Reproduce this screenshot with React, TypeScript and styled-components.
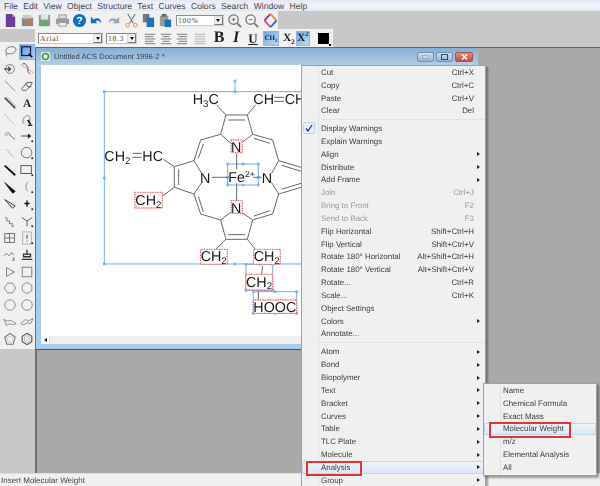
import React from "react";
import styled, { createGlobalStyle } from "styled-components";

const Global = createGlobalStyle`
  html, body { margin: 0; padding: 0; background: #c8c8c8; }
  * { box-sizing: border-box; }
`;

const UI = `"Liberation Sans", Arial, sans-serif`;

const Shell = styled.div`
  position: relative;
  width: 600px;
  height: 486px;
  overflow: hidden;
  display: flex;
  flex-direction: column;
  font-family: ${UI};
  font-size: 8px;
  color: #3a3a3a;
  filter: blur(0.3px);
  text-rendering: geometricPrecision;
`;

const MenuBar = styled.div`
  height: 11px;
  flex: none;
  display: flex;
  align-items: center;
  gap: 5.3px;
  padding-left: 4px;
  background: linear-gradient(#e4e8f4, #f3f4fa 55%, #e2e5f2);
  font-size: 8.6px;
  color: #444;
`;

const TopBar = styled.div`
  height: 18px;
  flex: none;
  display: flex;
  background: #c8c8c8;
`;

const TopTools = styled.div`
  width: 278px;
  display: flex;
  align-items: center;
  padding-left: 1.5px;
  background: #f0f0f0;
`;

const IconSlot = styled.div<{ $w?: number; $ml?: number; $on?: boolean }>`
  width: ${(p) => p.$w ?? 17.3}px;
  margin-left: ${(p) => p.$ml ?? 0}px;
  height: 15px;
  flex: none;
  display: flex;
  align-items: center;
  justify-content: center;
  background: ${(p) => (p.$on ? "linear-gradient(135deg,#6f9fe0,#bfe0fa)" : "transparent")};
  outline: ${(p) => (p.$on ? "1px solid #8fb6ea" : "none")};
  outline-offset: -1px;
`;

const Combo = styled.div<{ $w: number; $ml?: number }>`
  width: ${(p) => p.$w}px;
  margin-left: ${(p) => p.$ml ?? 0}px;
  height: 11px;
  flex: none;
  display: flex;
  align-items: center;
  justify-content: space-between;
  background: #fff;
  border: 1px solid #8a8a8a;
  border-right-color: #ccc;
  border-bottom-color: #ccc;
  padding-left: 1px;
  font-family: "Liberation Serif", serif;
  font-size: 7.6px;
  letter-spacing: 0.7px;
  color: #444;
`;

const ComboDrop = styled.span`
  width: 9px;
  height: 9px;
  flex: none;
  display: flex;
  align-items: center;
  justify-content: center;
  background: #eee;
  border: 1px solid #777;
  border-top-color: #ddd;
  border-left-color: #ddd;
  &::after {
    content: "";
    border-left: 2.5px solid transparent;
    border-right: 2.5px solid transparent;
    border-top: 3px solid #111;
  }
`;

const Body = styled.div`
  flex: 1;
  min-height: 0;
  display: grid;
  grid-template-columns: 35px 1fr;
`;

const LeftColumn = styled.div`
  display: flex;
  flex-direction: column;
  background: #c8c8c8;
`;

const LeftSpacer = styled.div`
  height: 13px;
  flex: none;
`;

const Toolbox = styled.div`
  height: 307px;
  flex: none;
  display: grid;
  grid-template-columns: 17px 17px;
  grid-auto-rows: 16.9px;
  padding: 1.5px 0 0 1.5px;
  background: #f0f0f0;
`;

const ToolCell = styled.div<{ $on?: boolean }>`
  display: flex;
  align-items: center;
  justify-content: center;
  background: ${(p) => (p.$on ? "linear-gradient(135deg,#5f93d8,#b6daf6)" : "transparent")};
  outline: ${(p) => (p.$on ? "1px solid #8db4e6" : "none")};
  outline-offset: -1px;
`;

const RightColumn = styled.div`
  display: flex;
  flex-direction: column;
  min-width: 0;
`;

const FormatBar = styled.div`
  height: 18px;
  flex: none;
  display: flex;
  background: #c8c8c8;
`;

const FormatTools = styled.div`
  width: 298px;
  display: flex;
  align-items: center;
  padding-left: 3px;
  background: #f2f2f2;
`;

const BoldGlyph = styled.span<{ $italic?: boolean; $under?: boolean }>`
  font-family: "Liberation Serif", serif;
  font-weight: 700;
  font-size: ${(p) => (p.$under ? 13 : 16)}px;
  line-height: 1;
  color: #222;
  font-style: ${(p) => (p.$italic ? "italic" : "normal")};
  text-decoration: ${(p) => (p.$under ? "underline" : "none")};
`;

const ScriptGlyph = styled.span`
  font-family: "Liberation Serif", serif;
  font-weight: 700;
  font-size: 11px;
  line-height: 1;
  color: #222;
  white-space: nowrap;
  sub, sup { font-size: 7px; line-height: 0; }
`;

const ChemGlyph = styled.span`
  font-family: "Liberation Serif", serif;
  font-weight: 700;
  font-size: 7px;
  color: #123;
  sub { font-size: 5px; line-height: 0; }
`;

const Swatch = styled.span`
  position: relative;
  width: 11px;
  height: 11px;
  background: #000;
  &::after {
    content: "";
    position: absolute;
    right: -2px;
    bottom: -2px;
    width: 2px;
    height: 2px;
    background: #000;
  }
`;

const Mdi = styled.div`
  position: relative;
  flex: 1;
  background: #a9a9a9;
  border-left: 2px solid #6f6f6f;
  border-top: 1px solid #666;
`;

const DocWindow = styled.div`
  position: absolute;
  left: -1px;
  top: 0;
  width: 442px;
  height: 302px;
  display: flex;
  flex-direction: column;
  padding: 0 5px 5px;
  background: linear-gradient(#88aed2 0, #b3cde6 17px, #a7cdee 18px);
  border-bottom: 1px solid #1f6770;
  border-top-right-radius: 3px;
`;

const TitleBar = styled.div`
  height: 17px;
  flex: none;
  display: flex;
  align-items: center;
  font-size: 7.6px;
  color: #38424e;
`;

const TitleText = styled.span`
  margin-left: 4px;
  flex: 1;
  white-space: nowrap;
`;

const CaptionButton = styled.span<{ $close?: boolean; $w: number }>`
  width: ${(p) => p.$w}px;
  height: 10px;
  margin-left: 2px;
  display: flex;
  align-items: center;
  justify-content: center;
  border: 1px solid ${(p) => (p.$close ? "#a8554c" : "#6f93b6")};
  border-radius: 2px;
  background: ${(p) =>
    p.$close ? "linear-gradient(#e48d7e,#c8483a)" : "linear-gradient(#cfe0ef,#93b4d3)"};
`;

const Client = styled.div`
  flex: 1;
  min-height: 0;
  background: #fff;
`;

const Sheet = styled.svg`
  display: block;
  width: 100%;
  height: 100%;
`;

const HScroll = styled.div`
  height: 8px;
  flex: none;
  display: flex;
  background: #efefef;
`;

const ScrollArrow = styled.span`
  width: 9px;
  display: flex;
  align-items: center;
  justify-content: center;
  background: #fff;
  border-right: 1px solid #d8d8d8;
  &::after {
    content: "";
    border-top: 2.5px solid transparent;
    border-bottom: 2.5px solid transparent;
    border-right: 3px solid #111;
  }
`;

const StatusBar = styled.div`
  height: 13px;
  flex: none;
  display: flex;
  align-items: center;
  padding: 1px 0 0 1px;
  background: #f0f0f0;
  border-top: 1px solid #ddd;
  font-size: 8px;
  color: #444;
`;

const Popup = styled.div<{ $left: number; $top: number; $width: number; $height: number; $gutter: number }>`
  position: absolute;
  left: ${(p) => p.$left}px;
  top: ${(p) => p.$top}px;
  width: ${(p) => p.$width}px;
  height: ${(p) => p.$height}px;
  border: 1px solid #a0a0a0;
  box-shadow: 2px 2px 2px rgba(0, 0, 0, 0.35);
  background:
    linear-gradient(#e2e3e3, #e2e3e3) ${(p) => p.$gutter}px 0 / 1px 100% no-repeat,
    #f0f0f0;
  font-size: 7.9px;
  color: #3c3c3c;
`;

const Row = styled.div<{ $hot?: boolean; $off?: boolean; $gutter: number }>`
  position: relative;
  height: 12.85px;
  display: flex;
  align-items: center;
  padding-left: ${(p) => p.$gutter + 3}px;
  white-space: nowrap;
  color: ${(p) => (p.$off ? "#9a9a9a" : "inherit")};
  border-radius: 2px;
  background: ${(p) => (p.$hot ? "linear-gradient(#f1f5fc,#d9e5f6)" : "transparent")};
  box-shadow: ${(p) => (p.$hot ? "inset 0 0 0 1px #c3d6f0" : "none")};
`;

const RowLabel = styled.span`
  flex: 1;
`;

const RowKeys = styled.span`
  margin-right: 11px;
`;

const SubArrow = styled.span`
  width: 0;
  height: 0;
  margin-right: 5px;
  border-top: 2.5px solid transparent;
  border-bottom: 2.5px solid transparent;
  border-left: 3px solid #222;
`;

const CheckBox = styled.span`
  position: absolute;
  left: 1px;
  top: 0;
  width: 12px;
  height: 12px;
  display: flex;
  align-items: center;
  justify-content: center;
  background: #e6f0fb;
  border: 1px solid #b8d2f0;
  border-radius: 2px;
`;

const Divider = styled.div<{ $h: number; $gutter: number }>`
  height: ${(p) => p.$h}px;
  display: flex;
  align-items: center;
  padding-left: ${(p) => p.$gutter + 1}px;
  &::after {
    content: "";
    flex: 1;
    height: 1px;
    background: #e2e3e3;
  }
`;

const RedBox = styled.span<{ $left: number; $top: number; $w: number; $h: number }>`
  position: absolute;
  left: ${(p) => p.$left}px;
  top: ${(p) => p.$top}px;
  width: ${(p) => p.$w}px;
  height: ${(p) => p.$h}px;
  border: 2px solid #e8322e;
`;

const Ico = styled.svg.attrs({ viewBox: "0 0 16 16" })<{ $s?: number }>`
  width: ${(p) => p.$s ?? 15}px;
  height: ${(p) => p.$s ?? 15}px;
  display: block;
`;

const Tool = ({ children, on }: { children: React.ReactNode; on?: boolean }) => (
  <ToolCell $on={on}>
    <Ico $s={14} fill="none" stroke="#666" strokeWidth="0.9">
      {children}
    </Ico>
  </ToolCell>
);

const Corner = () => <path d="M13 13h2v2h-2z" fill="#222" stroke="none" />;

const tools: { on?: boolean; g: React.ReactNode }[] = [
  { g: <><ellipse cx="9" cy="6" rx="6" ry="4" transform="rotate(-15 9 6)" /><path d="M4 9c-1 2 0 3 1 4" /></> },
  { on: true, g: <><rect x="2" y="2" width="10" height="10" stroke="#123" strokeWidth="1.4" /><path d="M10 10l4 4" stroke="#111" strokeWidth="2" /></> },
  { g: <><circle cx="8" cy="8" r="5" /><path d="M1 8h7M6 5.5L8.5 8 6 10.5" stroke="#222" strokeWidth="1.3" /><circle cx="8" cy="8" r="1" fill="#222" /></> },
  { g: <><path d="M3 2h3l3 4v5l3 3" stroke="#333" /><path d="M1 3l14 9" stroke="#e44" strokeDasharray="2 1" /></> },
  { g: <path d="M2 2l12 12" stroke="#777" /> },
  { g: <path d="M2 11l6-7h6l-2 4-5 5H3zM7 5l2 4h4" stroke="#444" /> },
  { g: <><path d="M2 2l12 12" stroke="#444" strokeWidth="2" /><path d="M4 1l11 11" stroke="#999" /></> },
  { g: <text x="8" y="13" textAnchor="middle" fontFamily="Liberation Serif, serif" fontWeight="700" fontSize="13" fill="#222" stroke="none">A</text> },
  { g: <path d="M2 2l12 12" stroke="#888" strokeDasharray="2 2" /> },
  { g: <><path d="M4 12c-2-4 1-9 5-9 3 0 3 5 2 7" /><path d="M9 8l3 5" stroke="#111" strokeWidth="2" /><path d="M9 14h5" stroke="#111" strokeWidth="1.4" /></> },
  { g: <path d="M3 4l3 3M5 3l4 4M7 6l3 3M9 8l3 3M11 10l3 2M2 6l2 2" stroke="#666" /> },
  { g: <><path d="M1 8h10" stroke="#222" /><path d="M9 5l4 3-4 3z" fill="#222" stroke="none" /><Corner /></> },
  { g: <path d="M3 4l2 2M5 4l3 3M6 7l3 2M8 9l3 2M10 10l3 3" stroke="#b4b4b4" /> },
  { g: <><circle cx="7.5" cy="7.5" r="6" stroke="#555" /><Corner /></> },
  { g: <path d="M2 3l12 11" stroke="#111" strokeWidth="2.2" /> },
  { g: <><rect x="1" y="3" width="12" height="9" stroke="#555" strokeWidth="1.1" /><Corner /></> },
  { g: <path d="M2 3l12 10-3 2z" fill="#111" stroke="#111" /> },
  { g: <><path d="M9 2c-3 3-3 8 0 11" stroke="#777" /><Corner /></> },
  { g: <path d="M2 3l12 7-3 3z" fill="#ddd" stroke="#222" /> },
  { g: <><path d="M8 4v7M5 7.5h6" stroke="#111" strokeWidth="1.6" /><Corner /></> },
  { g: <path d="M2 4l3 1-1 3 4 0-1 3 4 0-1 3 3 0" stroke="#666" /> },
  { g: <><path d="M2 4l6 4 6-4M8 8v6" stroke="#555" strokeWidth="1.1" /><Corner /></> },
  { g: <><rect x="2" y="3" width="11" height="10" stroke="#555" /><path d="M2 8h11M7.5 3v10" stroke="#555" /></> },
  { g: <><rect x="3" y="1" width="10" height="14" strokeDasharray="1 1" stroke="#555" /><path d="M8 4v5M8 11v1" stroke="#222" /><Corner /></> },
  { g: <><path d="M1 9l3-3 3 3 3-4 2 3" stroke="#666" /><path d="M11 11l2 1-2 2h2" stroke="#444" /></> },
  { g: <><path d="M8 2v6M4 7h8v3H4zM2 13h12" stroke="#333" strokeWidth="1.5" /></> },
  { g: <path d="M4 3v10l9-5z" stroke="#666" /> },
  { g: <rect x="2.5" y="2.5" width="11" height="11" stroke="#666" /> },
  { g: <path d="M1.5 8L5 2.5h6L14.5 8 11 13.5H5z" stroke="#777" /> },
  { g: <path d="M8 1.5L13.5 5v6L8 14.5 2.5 11V5z" stroke="#777" /> },
  { g: <circle cx="8" cy="8" r="6" stroke="#777" /> },
  { g: <circle cx="8" cy="8" r="6" stroke="#777" /> },
  { g: <path d="M1 5l4 2 4-1 6 4-4 1-4-1-3 2z" stroke="#777" /> },
  { g: <path d="M1 10l5-5 3 2 6-3-3 6-3-1-5 2z" stroke="#777" /> },
  { g: <><path d="M8 1.5l6 4.5-2.3 8H4.3L2 6z" stroke="#777" strokeWidth="1.2" /><path d="M8 4.5l3.4 2.4-1.3 4.6H5.9L4.6 6.9z" stroke="#c4c4c4" /></> },
  { g: <><path d="M8 1.5L13.5 5v6L8 14.5 2.5 11V5z" stroke="#555" strokeWidth="1.3" /><path d="M8 4l3 2v4l-3 2-3-2V6z" stroke="#b4b4b4" /></> },
];

const NewIcon = () => (
  <Ico><path d="M3 1h7l3 3v11H3z" fill="#6a3d96" /><path d="M10 1l3 3h-3z" fill="#b9a3d6" /></Ico>
);
const OpenIcon = () => (
  <Ico><path d="M2 5h12v9H2z" fill="#8a8a8a" /><path d="M3 2h9v4H3z" fill="#c8c8c8" /><path d="M6 9h5M9 6.5L11.5 9 9 11.5" stroke="#e8701a" strokeWidth="1.6" fill="none" /></Ico>
);
const SaveIcon = () => (
  <Ico><path d="M2 2h12v12H2z" fill="#8e9a8e" /><path d="M4 2h8v5H4z" fill="#dfe8df" /><path d="M4 9h8v5H4z" fill="#58b060" /></Ico>
);
const PrintIcon = () => (
  <Ico><path d="M4 2h8v4H4z" fill="#ddd" stroke="#999" /><path d="M1 6h14v6H1z" fill="#9c9c9c" /><path d="M4 10h8v4H4z" fill="#eee" stroke="#999" /></Ico>
);
const HelpIcon = () => (
  <Ico><circle cx="8" cy="8" r="7" fill="#0f6fc0" /><text x="8" y="12" textAnchor="middle" fontFamily="Liberation Sans, sans-serif" fontWeight="700" fontSize="11" fill="#fff">?</text></Ico>
);
const UndoIcon = ({ c }: { c: string }) => (
  <Ico><path d="M2 4v7h7L7 9c2-2 4-1 6 2 0-5-4-7-8-4z" fill={c} /></Ico>
);
const RedoIcon = () => (
  <Ico><g transform="matrix(-1 0 0 1 16 0)"><path d="M2 4v7h7L7 9c2-2 4-1 6 2 0-5-4-7-8-4z" fill="#a4a4a4" /></g></Ico>
);
const CutIcon = () => (
  <Ico fill="none"><path d="M4 1l6 10M12 1L6 11" stroke="#777" strokeWidth="1.2" /><circle cx="4" cy="13" r="2" stroke="#ef8a3c" /><circle cx="12" cy="13" r="2" stroke="#ef8a3c" /></Ico>
);
const CopyIcon = () => (
  <Ico><path d="M2 1h7v9H2z" fill="#777" /><path d="M6 5h8v10H6z" fill="#1f6fb8" /></Ico>
);
const PasteIcon = () => (
  <Ico><path d="M2 3h9v11H2z" fill="#9a9a9a" /><path d="M4 1h5v3H4z" fill="#666" /><path d="M7 7h7v8H7z" fill="#1f6fb8" /></Ico>
);
const ZoomIcon = ({ plus }: { plus?: boolean }) => (
  <Ico fill="none">
    <circle cx="7" cy="7" r="5" stroke="#777" strokeWidth="1.4" fill="#f3f3f3" />
    <path d="M5 7h4" stroke="#e06a20" strokeWidth="1.3" />
    {plus && <path d="M7 5v4" stroke="#e06a20" strokeWidth="1.3" />}
    <path d="M11 11l4 4" stroke="#777" strokeWidth="2" />
  </Ico>
);
const DiamondIcon = () => (
  <Ico fill="none">
    <path d="M8 1L1.5 8" stroke="#8a3aa8" strokeWidth="2" />
    <path d="M8 1l6.5 7" stroke="#f08a30" strokeWidth="2" />
    <path d="M1.5 8L8 15" stroke="#e84a7a" strokeWidth="2" />
    <path d="M14.5 8L8 15" stroke="#2f6fc8" strokeWidth="2" />
  </Ico>
);
const AlignIcon = ({ rows, c = "#777" }: { rows: [number, number][]; c?: string }) => (
  <Ico $s={15} fill="none" stroke={c}>
    {rows.map(([a, b], i) => (
      <path key={i} d={`M${a} ${3.5 + i * 2.5}H${b}`} />
    ))}
  </Ico>
);

const HandleRect = styled.rect`
  fill: #78b6f6;
`;
const Handle = ({ x, y }: { x: number; y: number }) => <HandleRect x={x - 4} y={y - 4} width="8" height="8" />;

const AtomText = styled.text`
  font-family: "Liberation Sans", sans-serif;
  font-size: 43px;
  fill: #1a1a1a;
  stroke: none;
`;

const bonds =
  "M425 222L392 193L408 135L472 135L488 193L450 222 M415 150L465 150 M408 135L380 105 M472 135L497 105 M392 193L332 210L312 272 M340 222L325 265 M488 193L548 210L566 272 M492 205L540 220 M312 272L335 310 M312 272L253 290L253 352L312 372L335 338 M266 298L266 345 M253 290L220 268 M253 352L218 378 M312 372L332 432L392 450 M325 380L340 425 M392 450L425 425 M392 450L408 508L472 508L488 450L452 425 M415 494L465 494 M408 508L378 537 M472 508L495 537 M488 450L548 432L566 372 M492 438L540 422 M566 272L545 310 M566 372L545 338 M566 272L640 294 M575 286L640 306 M566 372L640 350 M575 358L640 338 M365 322L413 322 M440 250L440 298 M440 340L440 395 M490 322L515 322 M518 588L515 613 M505 665L505 692 M128 250L155 250 M128 262L155 262 M552 82L582 82 M552 94L582 94";

const redBoxes = [
  [424, 210, 33, 38],
  [424, 392, 33, 38],
  [135, 367, 82, 47],
  [332, 538, 80, 45],
  [491, 538, 80, 45],
  [468, 613, 80, 47],
  [490, 690, 130, 40],
];

const handles = [
  [435, 33], [43, 65], [435, 65], [43, 324], [43, 582], [435, 582],
  [413, 282], [459, 282], [505, 282], [413, 322], [505, 322], [413, 345], [459, 345], [505, 345],
  [468, 583], [508, 583], [548, 583], [468, 661], [508, 661], [548, 661],
  [490, 665], [555, 665], [620, 665], [490, 730], [555, 730], [620, 730],
];

const Sub = ({ children }: { children: React.ReactNode }) => (
  <tspan dy="8" fontSize="29">{children}</tspan>
);

const Molecule = () => (
  <Sheet>
    <g transform="translate(49 5) scale(0.3333)">
      <g fill="none" stroke="#6ab0f5" strokeWidth="3">
        <path d="M435 33V65 M43 65H660 M43 65V582 M43 582H660" />
        <rect x="413" y="282" width="92" height="63" />
        <rect x="468" y="583" width="80" height="78" />
        <rect x="490" y="665" width="130" height="65" />
      </g>
      {handles.map(([x, y], i) => <Handle key={i} x={x} y={y} />)}
      <path d={bonds} fill="none" stroke="#666" strokeWidth="3" />
      <g fill="#fff" stroke="#ee6a6a" strokeWidth="4" strokeDasharray="3 2">
        {redBoxes.map(([x, y, w, h], i) => <rect key={i} x={x} y={y} width={w} height={h} />)}
      </g>
      <AtomText x="308" y="103">H<Sub>3</Sub><tspan dy="-8">C</tspan></AtomText>
      <AtomText x="490" y="103">CH</AtomText>
      <AtomText x="584" y="103">CH</AtomText>
      <AtomText x="43" y="273">CH<Sub>2</Sub></AtomText>
      <AtomText x="157" y="273">HC</AtomText>
      <AtomText x="423" y="247">N</AtomText>
      <AtomText x="423" y="429">N</AtomText>
      <AtomText x="330" y="338">N</AtomText>
      <AtomText x="515" y="338">N</AtomText>
      <AtomText x="415" y="335">Fe<tspan dy="-14" fontSize="26">2+</tspan></AtomText>
      <AtomText x="136" y="405">CH<Sub>2</Sub></AtomText>
      <AtomText x="332" y="574">CH<Sub>2</Sub></AtomText>
      <AtomText x="491" y="574">CH<Sub>2</Sub></AtomText>
      <AtomText x="468" y="650">CH<Sub>2</Sub></AtomText>
      <AtomText x="490" y="727">HOOC</AtomText>
    </g>
  </Sheet>
);

type Item = { t?: string; k?: string; arrow?: boolean; off?: boolean; check?: boolean; hot?: boolean; red?: [number, number, number, number]; sep?: number };

const mainMenu: Item[] = [
  { t: "Cut", k: "Ctrl+X" },
  { t: "Copy", k: "Ctrl+C" },
  { t: "Paste", k: "Ctrl+V" },
  { t: "Clear", k: "Del" },
  { sep: 4.7 },
  { t: "Display Warnings", check: true },
  { t: "Explain Warnings" },
  { t: "Align", arrow: true },
  { t: "Distribute", arrow: true },
  { t: "Add Frame", arrow: true },
  { t: "Join", k: "Ctrl+J", off: true },
  { t: "Bring to Front", k: "F2", off: true },
  { t: "Send to Back", k: "F3", off: true },
  { t: "Flip Horizontal", k: "Shift+Ctrl+H" },
  { t: "Flip Vertical", k: "Shift+Ctrl+V" },
  { t: "Rotate 180° Horizontal", k: "Alt+Shift+Ctrl+H" },
  { t: "Rotate 180° Vertical", k: "Alt+Shift+Ctrl+V" },
  { t: "Rotate...", k: "Ctrl+R" },
  { t: "Scale...", k: "Ctrl+K" },
  { t: "Object Settings" },
  { t: "Colors", arrow: true },
  { t: "Annotate..." },
  { sep: 5 },
  { t: "Atom", arrow: true },
  { t: "Bond", arrow: true },
  { t: "Biopolymer", arrow: true },
  { t: "Text", arrow: true },
  { t: "Bracket", arrow: true },
  { t: "Curves", arrow: true },
  { t: "Table", arrow: true },
  { t: "TLC Plate", arrow: true },
  { t: "Molecule", arrow: true },
  { t: "Analysis", arrow: true, hot: true, red: [4, 0, 56, 15] },
  { t: "Group", arrow: true },
];

const subMenu: Item[] = [
  { t: "Name" },
  { t: "Chemical Formula" },
  { t: "Exact Mass" },
  { t: "Molecular Weight", hot: true, red: [5, -1, 82, 16] },
  { t: "m/z" },
  { t: "Elemental Analysis" },
  { t: "All" },
];

const MenuList = ({ items, gutter }: { items: Item[]; gutter: number }) => (
  <>
    {items.map((it, i) =>
      it.sep ? (
        <Divider key={i} $h={it.sep} $gutter={gutter} />
      ) : (
        <Row key={i} $hot={it.hot} $off={it.off} $gutter={gutter}>
          {it.check && (
            <CheckBox>
              <svg width="8" height="8" viewBox="0 0 8 8" fill="none">
                <path d="M1 4.5L3 7l4-6" stroke="#27308f" strokeWidth="1.3" />
              </svg>
            </CheckBox>
          )}
          <RowLabel>{it.t}</RowLabel>
          {it.k && <RowKeys>{it.k}</RowKeys>}
          {it.arrow && <SubArrow />}
          {it.red && <RedBox $left={it.red[0]} $top={it.red[1]} $w={it.red[2]} $h={it.red[3]} />}
        </Row>
      )
    )}
  </>
);

const menuNames = ["File", "Edit", "View", "Object", "Structure", "Text", "Curves", "Colors", "Search", "Window", "Help"];

export default function App() {
  return (
    <>
      <Global />
      <Shell>
        <MenuBar>
          {menuNames.map((m) => <span key={m}>{m}</span>)}
        </MenuBar>
        <TopBar>
          <TopTools>
            <IconSlot><NewIcon /></IconSlot>
            <IconSlot><OpenIcon /></IconSlot>
            <IconSlot><SaveIcon /></IconSlot>
            <IconSlot><PrintIcon /></IconSlot>
            <IconSlot><HelpIcon /></IconSlot>
            <IconSlot><UndoIcon c="#0f6fc0" /></IconSlot>
            <IconSlot><RedoIcon /></IconSlot>
            <IconSlot><CutIcon /></IconSlot>
            <IconSlot><CopyIcon /></IconSlot>
            <IconSlot><PasteIcon /></IconSlot>
            <Combo $w={48} $ml={1.5}>100%<ComboDrop /></Combo>
            <IconSlot $ml={1.5}><ZoomIcon plus /></IconSlot>
            <IconSlot><ZoomIcon /></IconSlot>
            <IconSlot $ml={2}><DiamondIcon /></IconSlot>
          </TopTools>
        </TopBar>
        <Body>
          <LeftColumn>
            <LeftSpacer />
            <Toolbox>
              {tools.map((t, i) => <Tool key={i} on={t.on}>{t.g}</Tool>)}
            </Toolbox>
          </LeftColumn>
          <RightColumn>
            <FormatBar>
              <FormatTools>
                <Combo $w={65}>Arial<ComboDrop /></Combo>
                <Combo $w={31} $ml={3}>18.3<ComboDrop /></Combo>
                <IconSlot $w={16} $ml={5}><AlignIcon rows={[[2, 13], [2, 11], [2, 13], [2, 11], [2, 13]]} /></IconSlot>
                <IconSlot $w={16}><AlignIcon rows={[[2, 13], [4, 11], [2, 13], [4, 11], [2, 13]]} /></IconSlot>
                <IconSlot $w={16}><AlignIcon rows={[[2, 13], [4, 13], [2, 13], [4, 13], [2, 13]]} /></IconSlot>
                <IconSlot $w={16} $ml={2}><AlignIcon c="#b0b0b0" rows={[[2, 13], [2, 13], [2, 13], [2, 13], [2, 13]]} /></IconSlot>
                <IconSlot $w={16} $ml={3}><BoldGlyph>B</BoldGlyph></IconSlot>
                <IconSlot $w={16} $ml={1}><BoldGlyph $italic>I</BoldGlyph></IconSlot>
                <IconSlot $w={16} $ml={1}><BoldGlyph $under>U</BoldGlyph></IconSlot>
                <IconSlot $w={16} $ml={2} $on><ChemGlyph>CH<sub>2</sub></ChemGlyph></IconSlot>
                <IconSlot $w={14} $ml={3}><ScriptGlyph>X<sub>2</sub></ScriptGlyph></IconSlot>
                <IconSlot $w={14} $on><ScriptGlyph>X<sup>2</sup></ScriptGlyph></IconSlot>
                <IconSlot $w={14} $ml={6}><Swatch /></IconSlot>
              </FormatTools>
            </FormatBar>
            <Mdi>
              <DocWindow>
                <TitleBar>
                  <svg width="9" height="9" viewBox="0 0 9 9">
                    <rect width="9" height="9" rx="1.5" fill="#e8efe6" />
                    <circle cx="4.5" cy="4.5" r="3" fill="none" stroke="#3f9a3f" strokeWidth="1.6" />
                  </svg>
                  <TitleText>Untitled ACS Document 1996-2 *</TitleText>
                  <CaptionButton $w={17}>
                    <svg width="7" height="4"><rect y="1" width="7" height="2" fill="#fff" stroke="#555" strokeWidth="0.5" /></svg>
                  </CaptionButton>
                  <CaptionButton $w={17}>
                    <svg width="7" height="6"><rect x="0.5" y="0.5" width="6" height="5" fill="none" stroke="#445" /></svg>
                  </CaptionButton>
                  <CaptionButton $w={18} $close>
                    <svg width="7" height="6"><path d="M1 0.5l5 5M6 0.5l-5 5" stroke="#fff" strokeWidth="1.5" /></svg>
                  </CaptionButton>
                </TitleBar>
                <Client><Molecule /></Client>
                <HScroll><ScrollArrow /></HScroll>
              </DocWindow>
            </Mdi>
          </RightColumn>
        </Body>
        <StatusBar>Insert Molecular Weight</StatusBar>
        <Popup $left={301} $top={65} $width={185} $height={440} $gutter={16}>
          <MenuList items={mainMenu} gutter={16} />
        </Popup>
        <Popup $left={483} $top={383} $width={114} $height={93} $gutter={16}>
          <MenuList items={subMenu} gutter={16} />
        </Popup>
      </Shell>
    </>
  );
}
